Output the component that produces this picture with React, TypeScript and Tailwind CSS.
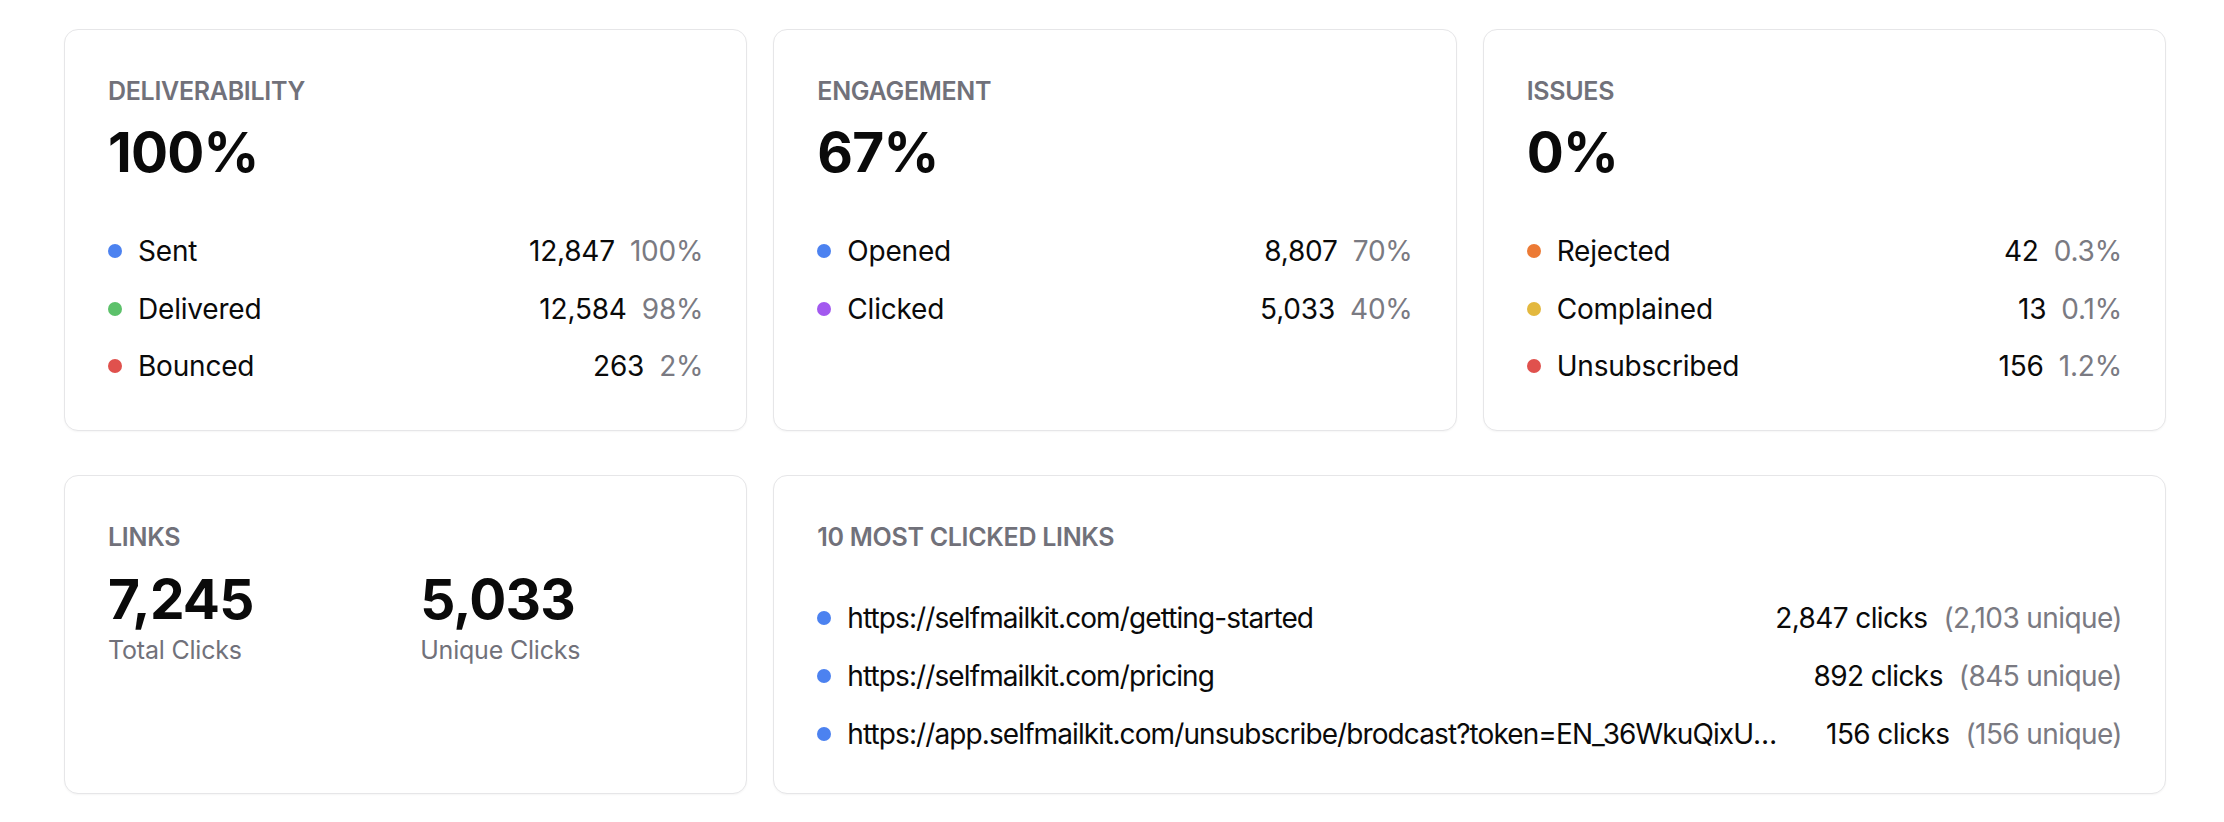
import React from "react";

type Stat = { label: string; value: string; pct: string; dot: string };

const deliverability: Stat[] = [
  { label: "Sent", value: "12,847", pct: "100%", dot: "bg-[#4c82f0]" },
  { label: "Delivered", value: "12,584", pct: "98%", dot: "bg-[#5cc16a]" },
  { label: "Bounced", value: "263", pct: "2%", dot: "bg-[#e0514d]" },
];

const engagement: Stat[] = [
  { label: "Opened", value: "8,807", pct: "70%", dot: "bg-[#4c82f0]" },
  { label: "Clicked", value: "5,033", pct: "40%", dot: "bg-[#a259ef]" },
];

const issues: Stat[] = [
  { label: "Rejected", value: "42", pct: "0.3%", dot: "bg-[#ec7a35]" },
  { label: "Complained", value: "13", pct: "0.1%", dot: "bg-[#e3b83e]" },
  { label: "Unsubscribed", value: "156", pct: "1.2%", dot: "bg-[#e0514d]" },
];

const links = [
  { url: "https://selfmailkit.com/getting-started", clicks: "2,847", unique: "2,103" },
  { url: "https://selfmailkit.com/pricing", clicks: "892", unique: "845" },
  {
    url: "https://app.selfmailkit.com/unsubscribe/brodcast?token=EN_36WkuQixUCe75xLq9PzT2mBv8",
    clicks: "156",
    unique: "156",
  },
];

function Card({ className = "", children }: { className?: string; children: React.ReactNode }) {
  return (
    <div
      className={`bg-white border border-[#e6e6e8] rounded-[14px] shadow-[0_1px_2px_rgba(0,0,0,0.04)] px-[43px] pt-[45px] ${className}`}
    >
      {children}
    </div>
  );
}

function Label({ children }: { children: React.ReactNode }) {
  return (
    <div className="text-[25px] leading-[32px] font-semibold uppercase text-[#71717a] tracking-[-0.3px]">
      {children}
    </div>
  );
}

function StatCard({ title, big, rows }: { title: string; big: string; rows: Stat[] }) {
  return (
    <Card className="pb-[44px]">
      <Label>{title}</Label>
      <div className="mt-[15px] text-[55px] leading-[60px] font-bold text-[#0a0a0a] tracking-[-0.8px]">{big}</div>
      <div className="mt-[49px] flex flex-col gap-[17.5px]">
        {rows.map((r) => (
          <div key={r.label} className="flex items-center h-[40px] text-[28px] tracking-[-0.2px]">
            <span className={`w-[14px] h-[14px] rounded-full shrink-0 ${r.dot}`} />
            <span className="ml-[16px] text-[#0a0a0a]">{r.label}</span>
            <span className="ml-auto text-[#0a0a0a]">{r.value}</span>
            <span className="ml-[15px] text-[#7a7a82]">{r.pct}</span>
          </div>
        ))}
      </div>
    </Card>
  );
}

export default function App() {
  return (
    <div
      className="min-h-screen bg-white pl-[64px] pr-[58px] pt-[29px] pb-[30px]"
      style={{ fontFamily: 'Inter, "Noto Sans", sans-serif' }}
    >
      <div className="grid grid-cols-3 gap-x-[26px] gap-y-[44px]">
        <StatCard title="Deliverability" big="100%" rows={deliverability} />
        <StatCard title="Engagement" big="67%" rows={engagement} />
        <StatCard title="Issues" big="0%" rows={issues} />

        <Card>
          <Label>Links</Label>
          <div className="mt-[16px] grid grid-cols-2 gap-x-[29px]">
            <div>
              <div className="text-[55px] leading-[60px] font-bold text-[#0a0a0a] tracking-[-0.8px]">7,245</div>
              <div className="mt-[5px] text-[25px] leading-[32px] text-[#71717a] tracking-[-0.2px]">Total Clicks</div>
            </div>
            <div>
              <div className="text-[55px] leading-[60px] font-bold text-[#0a0a0a] tracking-[-0.8px]">5,033</div>
              <div className="mt-[5px] text-[25px] leading-[32px] text-[#71717a] tracking-[-0.2px]">Unique Clicks</div>
            </div>
          </div>
        </Card>

        <Card className="col-span-2 pb-[39px]">
          <Label>10 Most Clicked Links</Label>
          <div className="mt-[45px] flex flex-col gap-[18px]">
            {links.map((l) => (
              <div key={l.url} className="flex items-center h-[40px] text-[28px]">
                <span className="w-[14px] h-[14px] rounded-full shrink-0 bg-[#4c82f0]" />
                <span className="ml-[16px] flex-1 min-w-0 truncate text-[#0a0a0a] tracking-[-0.9px]">{l.url}</span>
                <span className="ml-[44px] shrink-0 text-[#0a0a0a] tracking-[-0.6px]">{l.clicks} clicks</span>
                <span className="ml-[16px] shrink-0 text-[#7a7a82] tracking-[-0.6px]">({l.unique} unique)</span>
              </div>
            ))}
          </div>
        </Card>
      </div>
    </div>
  );
}
